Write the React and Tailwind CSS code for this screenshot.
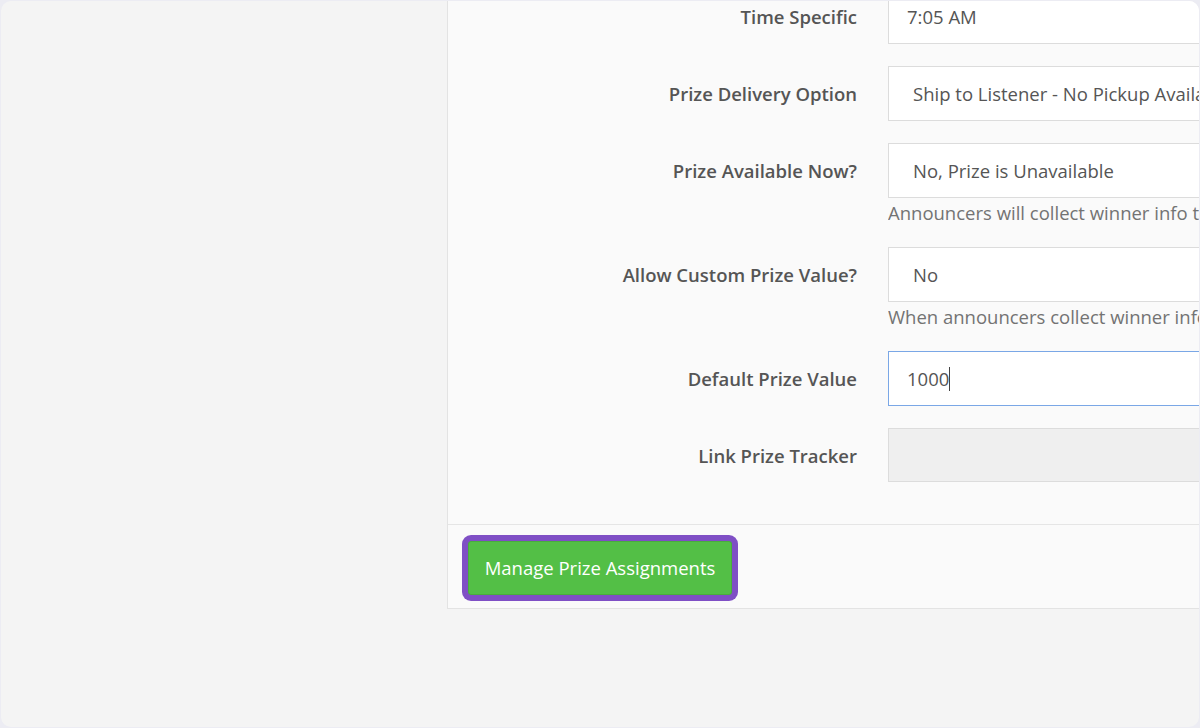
import React from "react";

const font = { fontFamily: '"Open Sans", "Liberation Sans", sans-serif' };

function Row({ label, children, help }) {
  return (
    <div className="flex items-start gap-[31px] mb-[22px]">
      <div className="w-[409px] shrink-0 h-[55px] flex items-center justify-end text-[18.5px] font-semibold text-[#555555]">
        {label}
      </div>
      <div className="w-[400px] shrink-0">
        {children}
        {help && (
          <div className="mt-[3px] h-[24px] leading-[23px] text-[18.5px] text-[#737373] whitespace-nowrap overflow-hidden">
            {help}
          </div>
        )}
      </div>
    </div>
  );
}

function Field({ children, px = "pl-[24px]", extra = "" }) {
  return (
    <div
      className={`h-[55px] bg-white border border-[#dcdcdc] flex items-center ${px} text-[18.5px] text-[#555555] whitespace-nowrap overflow-hidden ${extra}`}
    >
      {children}
    </div>
  );
}

export default function App() {
  return (
    <div className="w-[1200px] h-[728px] bg-[#ececf3] p-px" style={font}>
      <div className="w-full h-full rounded-[10px] bg-[#f4f4f4] overflow-hidden flex flex-col justify-end">
        <div className="ml-[446px] mb-[118px] w-[800px] shrink-0 bg-[#fafafa] border border-[#e3e3e3]">
          <div className="pt-[20px] pb-[19px]">
            <Row label="Time Specific">
              <Field px="pl-[18px]">7:05 AM</Field>
            </Row>
            <Row label="Prize Delivery Option">
              <Field>Ship to Listener - No Pickup Available</Field>
            </Row>
            <Row
              label="Prize Available Now?"
              help="Announcers will collect winner info to ship the prize"
            >
              <Field>No, Prize is Unavailable</Field>
            </Row>
            <Row
              label="Allow Custom Prize Value?"
              help="When announcers collect winner info they may enter a value"
            >
              <Field>No</Field>
            </Row>
            <Row label="Default Prize Value">
              <Field px="pl-[18px]" extra="!border-[#7aa7e6]">
                <span>1000</span>
                <span className="inline-block w-px h-[24px] bg-[#444]" />
              </Field>
            </Row>
            <Row label="Link Prize Tracker">
              <div className="h-[54px] bg-[#efefef] border border-[#dcdcdc]" />
            </Row>
          </div>
          <div className="border-t border-[#e5e5e5] pl-[14px] pt-[10px] pb-[7px]">
            <button className="h-[66px] px-[6px] py-[6px] rounded-[9px] bg-[#7f4fc5] flex">
              <span className="h-[54px] w-[264px] rounded-[3px] bg-[#53bf46] border border-[#49ad3d] flex items-center justify-center text-[18.5px] font-medium text-white">
                Manage Prize Assignments
              </span>
            </button>
          </div>
        </div>
      </div>
    </div>
  );
}
